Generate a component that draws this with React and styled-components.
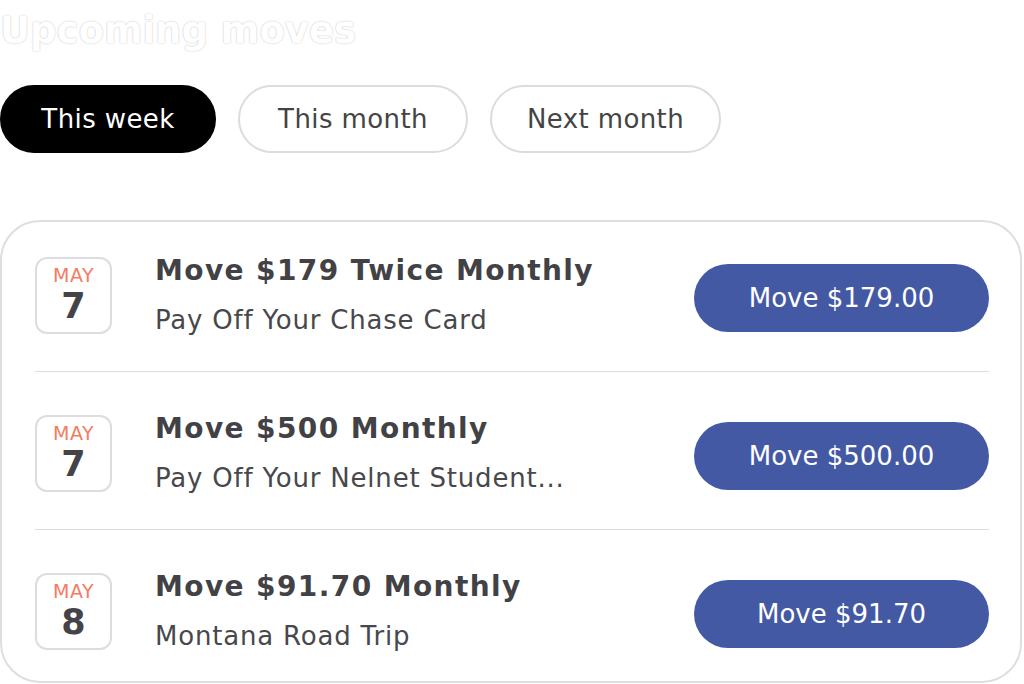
import React, { useState } from "react";
import styled, { createGlobalStyle } from "styled-components";

const GlobalStyle = createGlobalStyle`
  body {
    margin: 0;
    background: #fff;
    font-family: "DejaVu Sans", "Noto Sans", sans-serif;
  }
`

const Page = styled.div`
  width: 1024px;
  height: 684px;
  display: flex;
  flex-direction: column;
  overflow: hidden;
`

const Title = styled.h1`
  margin: 0;
  height: 62px;
  line-height: 62px;
  font-size: 37px;
  font-weight: 700;
  color: #fff;
  text-shadow: 0 0 1.5px rgba(0, 0, 0, 0.3);
`

const Tabs = styled.div`
  display: flex;
  gap: 22px;
  margin-top: 23px;
`

const Tab = styled.button`
  height: 68px;
  width: ${p => p.w}px;
  border-radius: 34px;
  border: 2px solid ${p => (p.active ? "#000" : "#dcdcdc")};
  background: ${p => (p.active ? "#000" : "#fff")};
  color: ${p => (p.active ? "#fff" : "#444")};
  font-family: inherit;
  font-size: 26px;
  letter-spacing: 0.4px;
  font-weight: 400;
  cursor: pointer;
  padding: 0;
`

const Card = styled.div`
  margin-top: 67px;
  width: 1022px;
  box-sizing: border-box;
  border: 2px solid #dedede;
  border-radius: 40px;
  padding: 0 31px 0 33px;
`

const Row = styled.div`
  display: flex;
  align-items: center;
  padding: 43px 0 37px;
  border-bottom: 1px solid #dcdcdc;
  &:first-child {
    padding-top: 35px;
  }
  &:last-child {
    border-bottom: none;
    padding-bottom: 31px;
  }
`

const DateBox = styled.div`
  width: 77px;
  height: 77px;
  box-sizing: border-box;
  border: 2px solid #dddddd;
  border-radius: 12px;
  display: flex;
  flex-direction: column;
  align-items: center;
  justify-content: center;
  flex-shrink: 0;
`

const Month = styled.span`
  color: #f47c5f;
  font-size: 19px;
  letter-spacing: 0.5px;
  line-height: 20px;
  margin-top: -3px;
`

const Day = styled.span`
  color: #444448;
  font-size: 35px;
  font-weight: 700;
  line-height: 36px;
  margin-top: 3px;
`

const Info = styled.div`
  margin-left: 43px;
  flex: 1;
  align-self: flex-start;
  display: flex;
  flex-direction: column;
`

const MoveTitle = styled.div`
  font-size: 28px;
  font-weight: 700;
  color: #424246;
  line-height: 28px;
  letter-spacing: 1.4px;
`

const MoveSub = styled.div`
  font-size: 26px;
  color: #48484c;
  line-height: 28px;
  letter-spacing: 0.8px;
  margin-top: 21px;
`

const MoveButton = styled.button`
  width: 295px;
  height: 68px;
  border-radius: 34px;
  border: none;
  background: #4459a4;
  color: #fff;
  font-family: inherit;
  font-size: 26px;
  margin-top: 5px;
  cursor: pointer;
  flex-shrink: 0;
`

const moves = [
  { month: "MAY", day: 7, title: "Move $179 Twice Monthly", sub: "Pay Off Your Chase Card", amount: "$179.00" },
  { month: "MAY", day: 7, title: "Move $500 Monthly", sub: "Pay Off Your Nelnet Student...", amount: "$500.00" },
  { month: "MAY", day: 8, title: "Move $91.70 Monthly", sub: "Montana Road Trip", amount: "$91.70" },
]

const tabs = [
  { label: "This week", w: 216 },
  { label: "This month", w: 230 },
  { label: "Next month", w: 231 },
]

export default function App() {
  const [active, setActive] = useState(0)

  return (
    <>
      <GlobalStyle />
      <Page>
        <Title>Upcoming moves</Title>
        <Tabs>
          {tabs.map((t, i) => (
            <Tab key={t.label} w={t.w} active={i === active} onClick={() => setActive(i)}>
              {t.label}
            </Tab>
          ))}
        </Tabs>
        <Card>
          {moves.map((m, i) => (
            <Row key={i}>
              <DateBox>
                <Month>{m.month}</Month>
                <Day>{m.day}</Day>
              </DateBox>
              <Info>
                <MoveTitle>{m.title}</MoveTitle>
                <MoveSub>{m.sub}</MoveSub>
              </Info>
              <MoveButton>Move {m.amount}</MoveButton>
            </Row>
          ))}
        </Card>
      </Page>
    </>
  )
}
